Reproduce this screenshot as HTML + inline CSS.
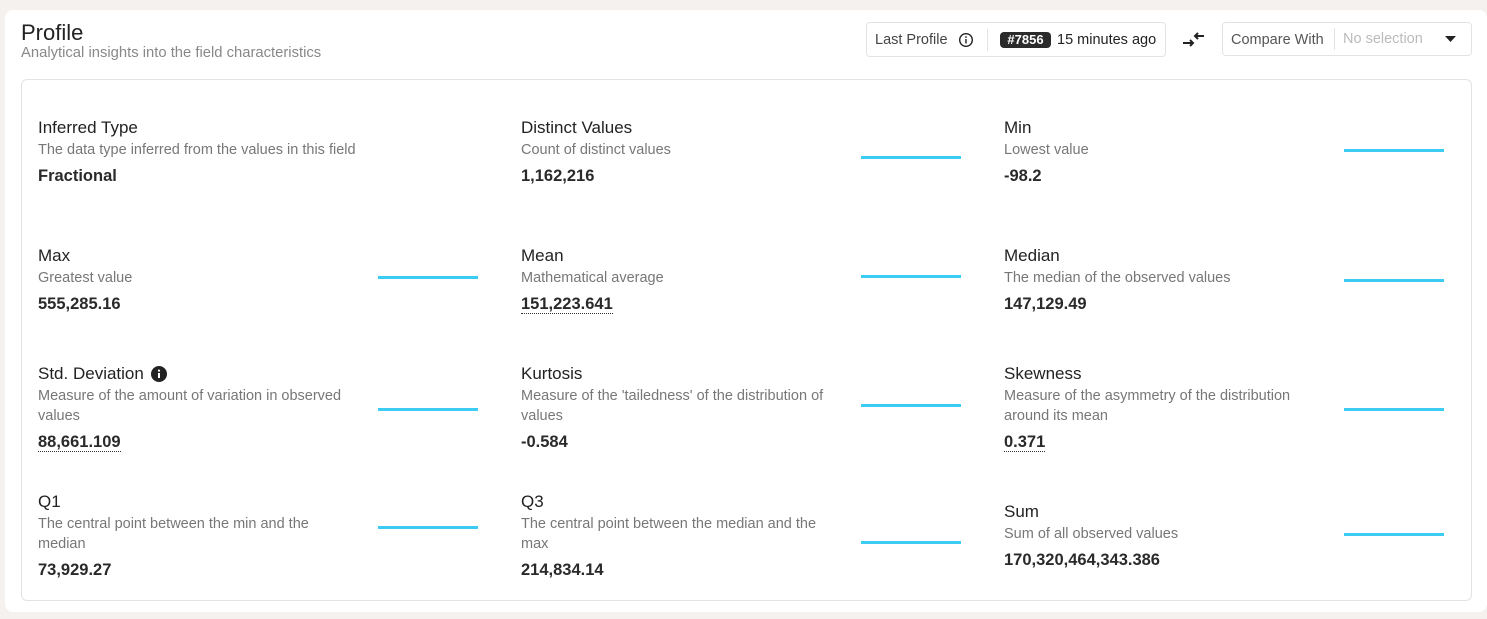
<!DOCTYPE html>
<html><head><meta charset="utf-8"><style>
*{margin:0;padding:0;box-sizing:border-box}
body{width:1487px;height:619px;background:#f4f1ee;font-family:"Liberation Sans",sans-serif;position:relative;overflow:hidden;color:#222}
.card{position:absolute;left:5px;top:10px;width:1482px;height:602px;background:#fff;border-radius:8px}
.a{position:absolute;white-space:nowrap}
.box{position:absolute;left:21px;top:79px;width:1451px;height:522px;border:1px solid #e3e3e3;border-radius:6px}
.t{font-size:17px;line-height:20px;color:#222;margin-top:0px}
.d{font-size:14.5px;line-height:20px;color:#777;margin-top:0px}
.v{font-size:16.5px;line-height:20px;font-weight:bold;color:#2a2a2a;margin-top:0px}
.u{border-bottom:1px dotted #333;line-height:18px}
.s{position:absolute;width:100px;height:3px;background:#3ccbf2}
.btn{position:absolute;border:1px solid #e3e3e3;border-radius:4px;background:#fff}
</style></head><body>
<div class="card"></div>
<div class="a" style="left:21px;top:20px;font-size:22px;line-height:26px;color:#222">Profile</div>
<div class="a" style="left:21px;top:44px;font-size:14.8px;line-height:18px;color:#888">Analytical insights into the field characteristics</div>

<div class="btn" style="left:866px;top:22px;width:300px;height:35px"></div>
<div class="a" style="left:875px;top:31px;font-size:14.5px;line-height:18px;color:#444">Last Profile</div>
<svg class="a" style="left:958px;top:32px" width="16" height="16" viewBox="0 0 16 16"><circle cx="8" cy="8" r="6.3" fill="none" stroke="#222" stroke-width="1.4"/><rect x="7.3" y="7" width="1.4" height="4.5" fill="#222"/><circle cx="8" cy="5" r="0.9" fill="#222"/></svg>
<div class="a" style="left:987px;top:29px;width:1px;height:22px;background:#e3e3e3"></div>
<div class="a" style="left:1000px;top:32px;width:51px;height:16px;background:#2b2b2b;border-radius:4px;color:#fff;font-size:13px;font-weight:bold;line-height:16px;text-align:center">#7856</div>
<div class="a" style="left:1057px;top:31px;font-size:14.5px;line-height:18px;color:#222">15 minutes ago</div>

<svg class="a" style="left:1182px;top:31px" width="24" height="16" viewBox="0 0 24 16"><path d="M22 5H14M16 2L13 5L16 8" stroke="#222" stroke-width="2" fill="none"/><path d="M1 12H10M8 9L11 12L8 15" stroke="#222" stroke-width="2" fill="none"/></svg>

<div class="btn" style="left:1222px;top:22px;width:250px;height:34px"></div>
<div class="a" style="left:1231px;top:31px;font-size:14.5px;line-height:18px;color:#555">Compare With</div>
<div class="a" style="left:1334px;top:28px;width:1px;height:22px;background:#e3e3e3"></div>
<div class="a" style="left:1343px;top:30px;font-size:14.5px;line-height:18px;color:#bbb">No selection</div>
<svg class="a" style="left:1445px;top:36px" width="11" height="7" viewBox="0 0 11 7"><path d="M0 0H11L5.5 6Z" fill="#222"/></svg>

<div class="box"></div>

<div class="a t" style="left:38px;top:118px">Inferred Type</div>
<div class="a d" style="left:38px;top:140px">The data type inferred from the values in this field</div>
<div class="a v" style="left:38px;top:166px">Fractional</div>

<div class="a t" style="left:521px;top:118px">Distinct Values</div>
<div class="a d" style="left:521px;top:140px">Count of distinct values</div>
<div class="a v" style="left:521px;top:166px">1,162,216</div>
<div class="s" style="left:861px;top:156px"></div>

<div class="a t" style="left:1004px;top:118px">Min</div>
<div class="a d" style="left:1004px;top:140px">Lowest value</div>
<div class="a v" style="left:1004px;top:166px">-98.2</div>
<div class="s" style="left:1344px;top:149px"></div>

<div class="a t" style="left:38px;top:246px">Max</div>
<div class="a d" style="left:38px;top:268px">Greatest value</div>
<div class="a v" style="left:38px;top:294px">555,285.16</div>
<div class="s" style="left:378px;top:276px"></div>

<div class="a t" style="left:521px;top:246px">Mean</div>
<div class="a d" style="left:521px;top:268px">Mathematical average</div>
<div class="a v u" style="left:521px;top:295px">151,223.641</div>
<div class="s" style="left:861px;top:275px"></div>

<div class="a t" style="left:1004px;top:246px">Median</div>
<div class="a d" style="left:1004px;top:268px">The median of the observed values</div>
<div class="a v" style="left:1004px;top:294px">147,129.49</div>
<div class="s" style="left:1344px;top:279px"></div>

<div class="a t" style="left:38px;top:364px">Std. Deviation</div>
<svg class="a" style="left:151px;top:366px" width="16" height="16" viewBox="0 0 16 16"><circle cx="8" cy="8" r="8" fill="#222"/><rect x="7" y="7" width="2" height="5" fill="#fff"/><circle cx="8" cy="4.6" r="1.1" fill="#fff"/></svg>
<div class="a d" style="left:38px;top:386px">Measure of the amount of variation in observed</div>
<div class="a d" style="left:38px;top:406px">values</div>
<div class="a v u" style="left:38px;top:433px">88,661.109</div>
<div class="s" style="left:378px;top:408px"></div>

<div class="a t" style="left:521px;top:364px">Kurtosis</div>
<div class="a d" style="left:521px;top:386px">Measure of the 'tailedness' of the distribution of</div>
<div class="a d" style="left:521px;top:406px">values</div>
<div class="a v" style="left:521px;top:432px">-0.584</div>
<div class="s" style="left:861px;top:404px"></div>

<div class="a t" style="left:1004px;top:364px">Skewness</div>
<div class="a d" style="left:1004px;top:386px">Measure of the asymmetry of the distribution</div>
<div class="a d" style="left:1004px;top:406px">around its mean</div>
<div class="a v u" style="left:1004px;top:433px">0.371</div>
<div class="s" style="left:1344px;top:408px"></div>

<div class="a t" style="left:38px;top:492px">Q1</div>
<div class="a d" style="left:38px;top:514px">The central point between the min and the</div>
<div class="a d" style="left:38px;top:534px">median</div>
<div class="a v" style="left:38px;top:560px">73,929.27</div>
<div class="s" style="left:378px;top:526px"></div>

<div class="a t" style="left:521px;top:492px">Q3</div>
<div class="a d" style="left:521px;top:514px">The central point between the median and the</div>
<div class="a d" style="left:521px;top:534px">max</div>
<div class="a v" style="left:521px;top:560px">214,834.14</div>
<div class="s" style="left:861px;top:541px"></div>

<div class="a t" style="left:1004px;top:502px">Sum</div>
<div class="a d" style="left:1004px;top:524px">Sum of all observed values</div>
<div class="a v" style="left:1004px;top:550px">170,320,464,343.386</div>
<div class="s" style="left:1344px;top:533px"></div>
</body></html>
